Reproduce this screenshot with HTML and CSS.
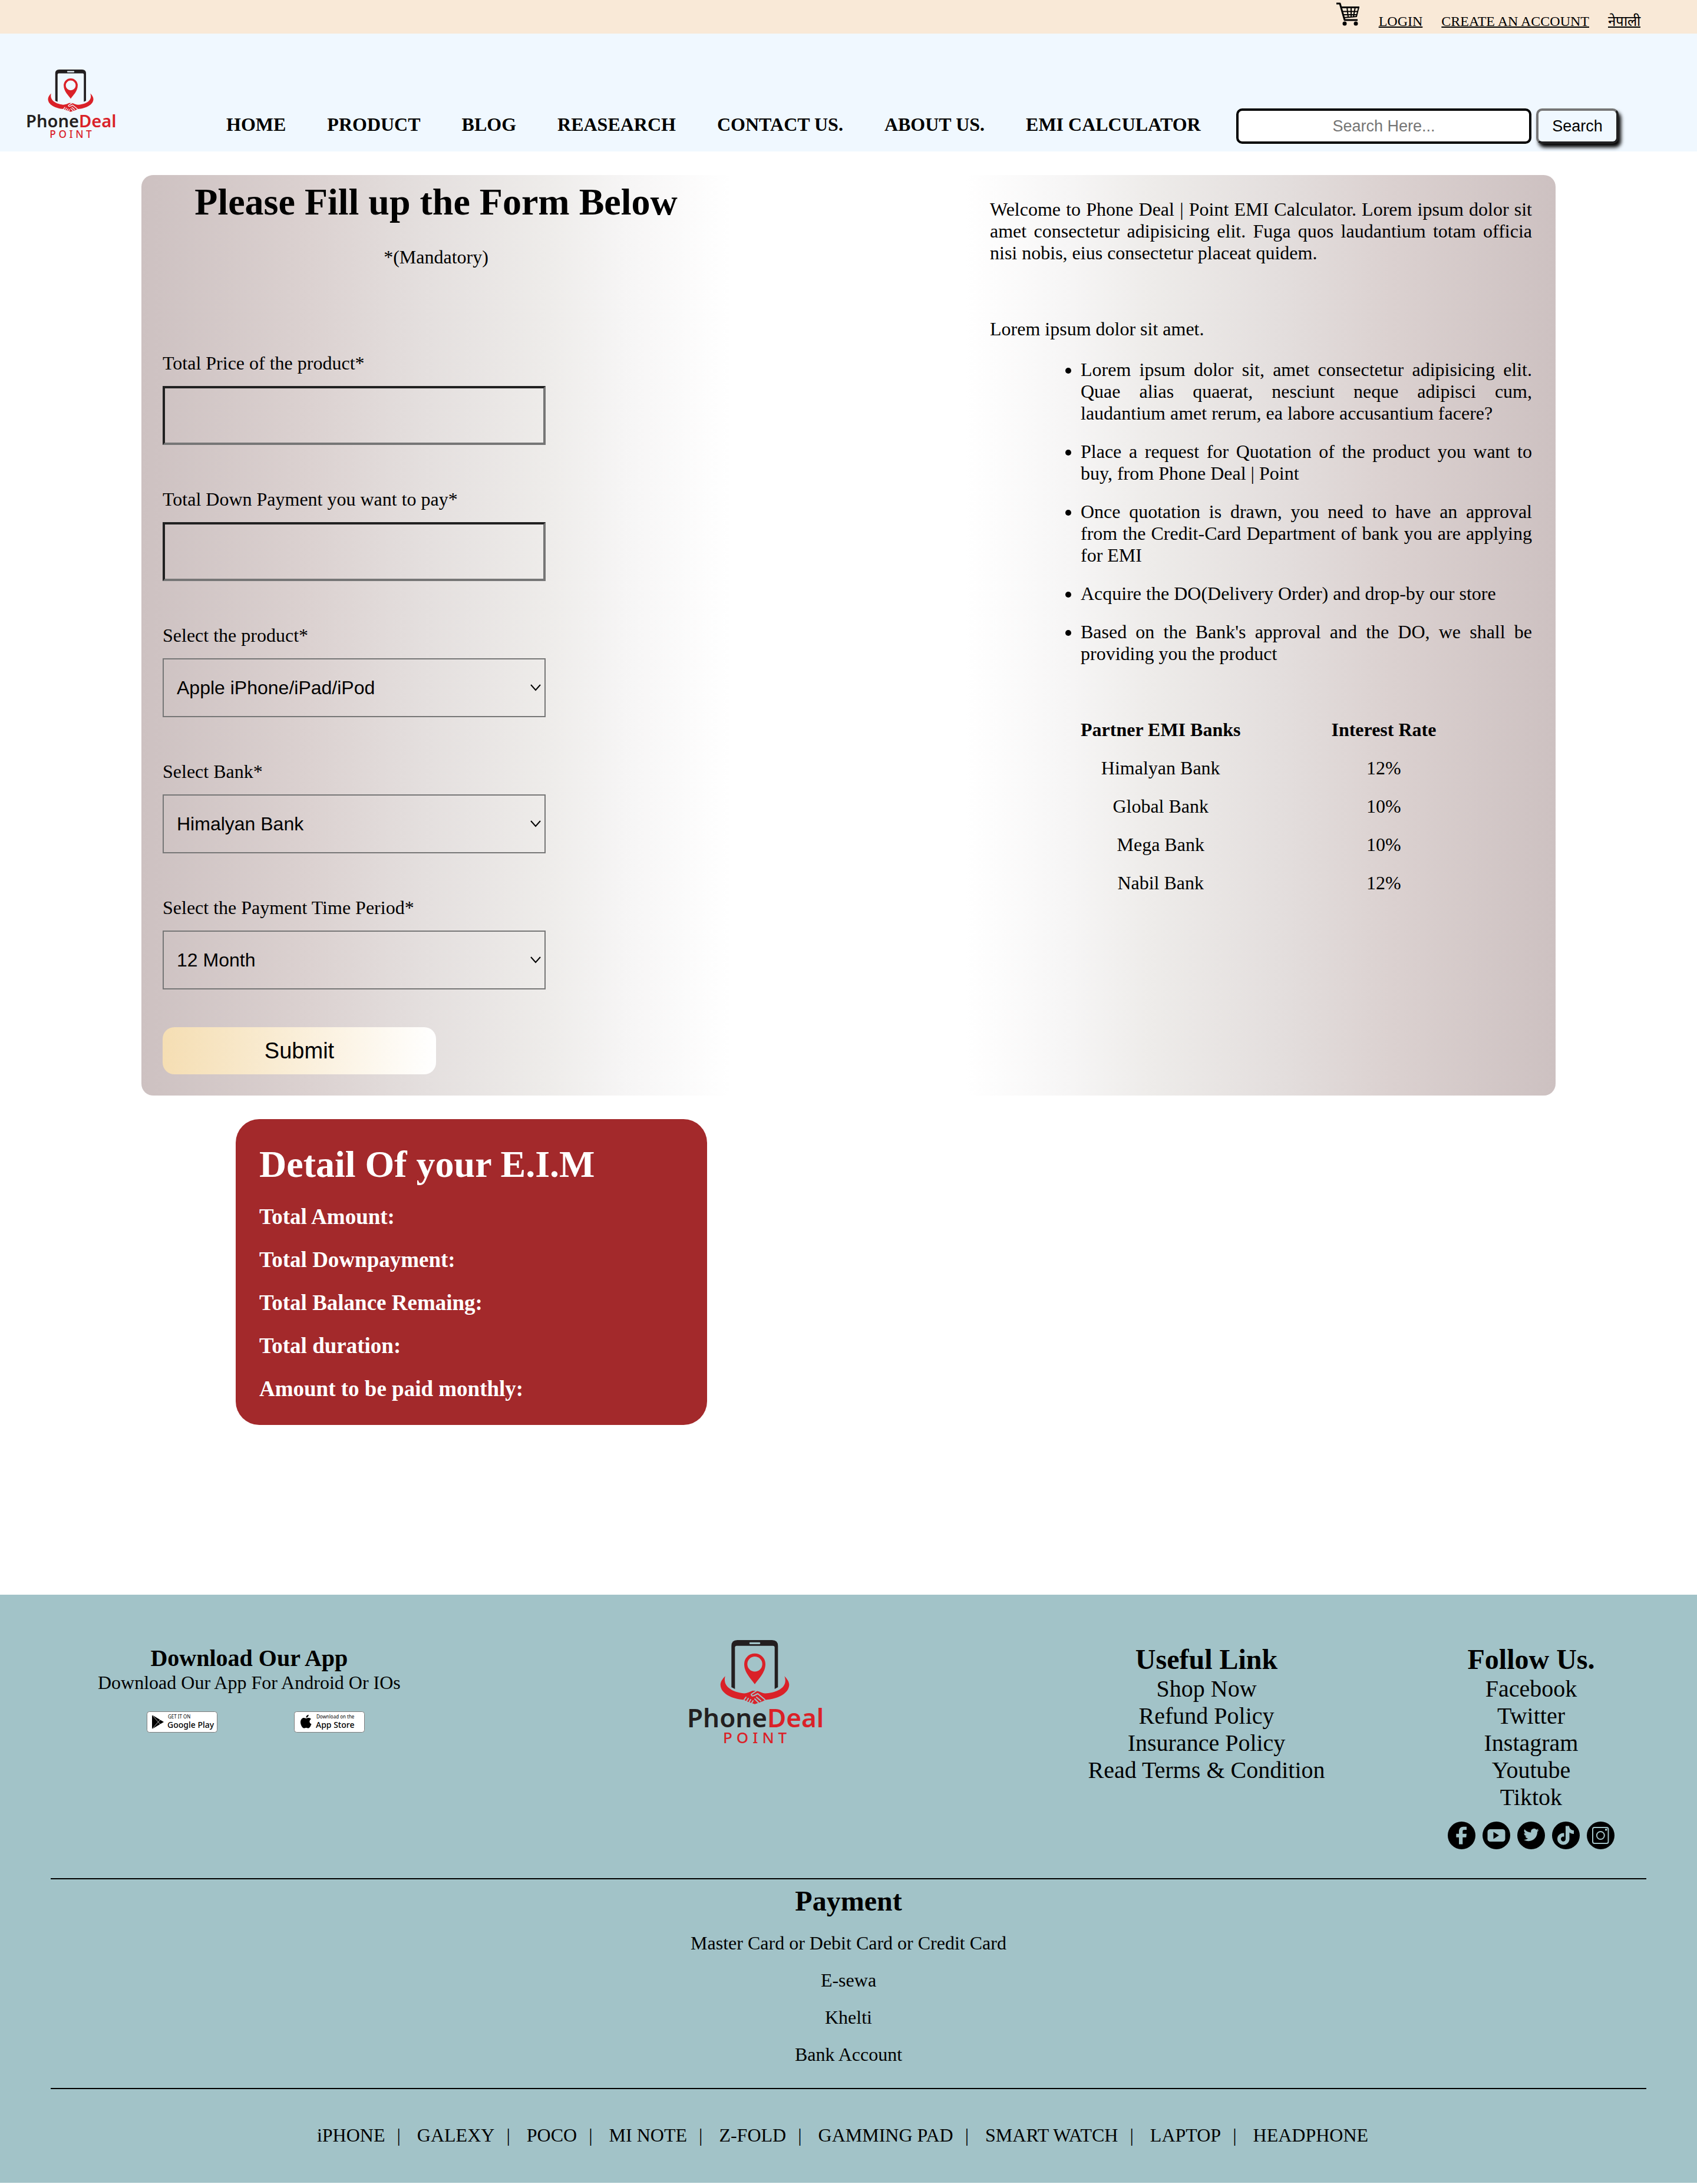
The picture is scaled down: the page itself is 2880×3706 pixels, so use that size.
FILE: index.html
```html
<!DOCTYPE html>
<html lang="en">
<head>
<meta charset="utf-8">
<meta name="viewport" content="width=device-width, initial-scale=1">
<title>EMI Calculator | Phone Deal Point</title>
<link rel="stylesheet" href="styles.css">
</head>
<body>
<div class="topbar">
  <a class="cart" href="#" aria-label="Cart">
    <svg width="40" height="40" viewBox="0 0 40 40" fill="none" stroke="#000">
      <path stroke-width="3" stroke-linejoin="round" d="M0 2H6L14 30H36"/>
      <path stroke-width="3" d="M8 8.500H39"/>
      <path stroke-width="2" d="M38 8L34 24L12 26M10 15.500H36M11 21H35M18 8L20 25M25 8V25M32 8L29 24"/>
      <circle cx="14" cy="36" r="3.500" fill="#000" stroke="none"/>
      <circle cx="33" cy="36" r="3.500" fill="#000" stroke="none"/>
    </svg>
  </a>
  <a href="#">LOGIN</a>
  <a href="#">CREATE AN ACCOUNT</a>
  <a href="#" lang="ne">नेपाली</a>
</div>

<header class="header">
  <a class="header-logo" href="#" aria-label="Phone Deal Point">
    <svg class="logo" viewBox="0 0 224 177">
      <path fill="#231f20" fill-rule="evenodd" d="M72.300 80V10Q72.300 0 82.300 0H141.300Q151.300 0 151.300 10V80L145.700 83V12.700Q145.700 9.700 142.700 9.700H81.300Q78.300 9.700 78.300 12.700V83ZM104 3.700Q102.700 3.700 102.700 5.300Q102.700 7 104 7H120Q121.300 7 121.300 5.300Q121.300 3.700 120 3.700Z"/>
      <path fill="#da2128" fill-rule="evenodd" d="M112 75C107 67 94 56 94 40.700A18 18 0 0 1 130 40.700C130 56 117 67 112 75ZM112 28A12.700 12.700 0 1 0 112 53.400A12.700 12.700 0 1 0 112 28Z"/>
      <path fill="#da2128" d="M61.700 61.300C57 66 53.700 71 53.700 76C54 90 72 100 94 101.500L98 104L112 108.700L125 104L130 101.500C152 100 170 90 170.300 76C170.300 71 167 66 162.300 61.300C170 82 146 90 130 90.500C122 90 119 86 113 86H108C103 88 98 91 91.700 90.300C74 88 57 79 61.700 61.300Z"/>
      <g class="logo-gap">
        <path d="M115 86L106 92Q106 96 111 94L117 91L129 101"/>
        <path d="M94 101L97 97M98 104L101 99M102 106L105 101M106 108L109 103M115 97L122 103M112 100L118 106"/>
      </g>
      <text class="logo-name" x="-3" y="148"><tspan fill="#231f20">Phone</tspan><tspan fill="#da2128">Deal</tspan></text>
      <text class="logo-sub" x="58" y="175" fill="#da2128">POINT</text>
    </svg>
  </a>
  <nav class="nav">
    <a href="#">HOME</a>
    <a href="#">PRODUCT</a>
    <a href="#">BLOG</a>
    <a href="#">REASEARCH</a>
    <a href="#">CONTACT US.</a>
    <a href="#">ABOUT US.</a>
    <a href="#">EMI CALCULATOR</a>
  </nav>
  <form class="search">
    <input type="text" placeholder="Search Here..." aria-label="Search">
    <button type="button">Search</button>
  </form>
</header>

<main class="main">
  <div class="panels">
    <form class="panel form-panel">
      <h1>Please Fill up the Form Below</h1>
      <p class="mandatory">*(Mandatory)</p>
      <div class="fields">
        <div class="field">
          <label for="price">Total Price of the product*</label>
          <input id="price" type="text">
        </div>
        <div class="field">
          <label for="down">Total Down Payment you want to pay*</label>
          <input id="down" type="text">
        </div>
        <div class="field">
          <label for="product">Select the product*</label>
          <div class="select">
            <select id="product"><option>Apple iPhone/iPad/iPod</option></select>
            <svg width="18" height="12" viewBox="0 0 18 12"><path d="M1 1L9 10L17 1"/></svg>
          </div>
        </div>
        <div class="field">
          <label for="bank">Select Bank*</label>
          <div class="select">
            <select id="bank"><option>Himalyan Bank</option><option>Global Bank</option><option>Mega Bank</option><option>Nabil Bank</option></select>
            <svg width="18" height="12" viewBox="0 0 18 12"><path d="M1 1L9 10L17 1"/></svg>
          </div>
        </div>
        <div class="field">
          <label for="period">Select the Payment Time Period*</label>
          <div class="select">
            <select id="period"><option>12 Month</option></select>
            <svg width="18" height="12" viewBox="0 0 18 12"><path d="M1 1L9 10L17 1"/></svg>
          </div>
        </div>
      </div>
      <button class="submit" type="button">Submit</button>
    </form>

    <section class="panel info-panel">
      <p>Welcome to Phone Deal | Point EMI Calculator. Lorem ipsum dolor sit amet consectetur adipisicing elit. Fuga quos laudantium totam officia nisi nobis, eius consectetur placeat quidem.</p>
      <p class="lead">Lorem ipsum dolor sit amet.</p>
      <ul>
        <li>Lorem ipsum dolor sit, amet consectetur adipisicing elit. Quae alias quaerat, nesciunt neque adipisci cum, laudantium amet rerum, ea labore accusantium facere?</li>
        <li>Place a request for Quotation of the product you want to buy, from Phone Deal | Point</li>
        <li>Once quotation is drawn, you need to have an approval from the Credit-Card Department of bank you are applying for EMI</li>
        <li>Acquire the DO(Delivery Order) and drop-by our store</li>
        <li>Based on the Bank's approval and the DO, we shall be providing you the product</li>
      </ul>
      <table>
        <thead><tr><th>Partner EMI Banks</th><th>Interest Rate</th></tr></thead>
        <tbody>
          <tr><td>Himalyan Bank</td><td>12%</td></tr>
          <tr><td>Global Bank</td><td>10%</td></tr>
          <tr><td>Mega Bank</td><td>10%</td></tr>
          <tr><td>Nabil Bank</td><td>12%</td></tr>
        </tbody>
      </table>
    </section>
  </div>

  <section class="detail">
    <h1>Detail Of your E.I.M</h1>
    <h3>Total Amount:</h3>
    <h3>Total Downpayment:</h3>
    <h3>Total Balance Remaing:</h3>
    <h3>Total duration:</h3>
    <h3>Amount to be paid monthly:</h3>
  </section>
</main>

<footer class="footer">
  <div class="footer-top">
    <section class="download">
      <h3>Download Our App</h3>
      <p>Download Our App For Android Or IOs</p>
      <div class="badges">
        <a href="#" aria-label="Get it on Google Play">
          <svg width="120" height="36" viewBox="0 0 120 36">
            <rect x=".5" y=".5" width="119" height="35" rx="4" fill="#fff" stroke="#7d7d7d"/>
            <path d="M9 6L29 18L9 30Z"/>
            <path d="M9 6L23 22M9 30L23 14" stroke="#fff" stroke-width=".7"/>
            <text class="badge-small" x="36" y="12">GET IT ON</text>
            <text class="badge-big" x="35" y="28">Google Play</text>
          </svg>
        </a>
        <a href="#" aria-label="Download on the App Store">
          <svg width="120" height="36" viewBox="0 0 120 36">
            <rect x=".5" y=".5" width="119" height="35" rx="4" fill="#fff" stroke="#7d7d7d"/>
            <path d="M20.500 12C22 11.500 23.500 10.600 25.500 11Q28 11.300 29 13C25 15.500 25.800 20 29.500 21.500C28.500 24.500 26.500 28.500 24.500 28.500C23 28.500 22.300 27.700 20.600 27.700C19 27.700 18 28.500 16.800 28.500C14 28.500 11 22.500 11 18.500C11 13.500 14 11 16.800 11C18.400 11 19.500 12 20.500 12ZM20.300 10.500C20.200 8 22.300 6 24.700 5.700C25 8.200 22.800 10.500 20.300 10.500Z"/>
            <text class="badge-small" x="38" y="12">Download on the</text>
            <text class="badge-big" x="37" y="28">App Store</text>
          </svg>
        </a>
      </div>
    </section>

    <a class="footer-logo" href="#" aria-label="Phone Deal Point">
      <svg class="logo" viewBox="0 0 224 177">
        <path fill="#231f20" fill-rule="evenodd" d="M72.300 80V10Q72.300 0 82.300 0H141.300Q151.300 0 151.300 10V80L145.700 83V12.700Q145.700 9.700 142.700 9.700H81.300Q78.300 9.700 78.300 12.700V83ZM104 3.700Q102.700 3.700 102.700 5.300Q102.700 7 104 7H120Q121.300 7 121.300 5.300Q121.300 3.700 120 3.700Z"/>
        <path fill="#da2128" fill-rule="evenodd" d="M112 75C107 67 94 56 94 40.700A18 18 0 0 1 130 40.700C130 56 117 67 112 75ZM112 28A12.700 12.700 0 1 0 112 53.400A12.700 12.700 0 1 0 112 28Z"/>
        <path fill="#da2128" d="M61.700 61.300C57 66 53.700 71 53.700 76C54 90 72 100 94 101.500L98 104L112 108.700L125 104L130 101.500C152 100 170 90 170.300 76C170.300 71 167 66 162.300 61.300C170 82 146 90 130 90.500C122 90 119 86 113 86H108C103 88 98 91 91.700 90.300C74 88 57 79 61.700 61.300Z"/>
        <g class="logo-gap">
          <path d="M115 86L106 92Q106 96 111 94L117 91L129 101"/>
          <path d="M94 101L97 97M98 104L101 99M102 106L105 101M106 108L109 103M115 97L122 103M112 100L118 106"/>
        </g>
        <text class="logo-name" x="-3" y="148"><tspan fill="#231f20">Phone</tspan><tspan fill="#da2128">Deal</tspan></text>
        <text class="logo-sub" x="58" y="175" fill="#da2128">POINT</text>
      </svg>
    </a>

    <section class="links">
      <h2>Useful Link</h2>
      <a href="#">Shop Now</a>
      <a href="#">Refund Policy</a>
      <a href="#">Insurance Policy</a>
      <a href="#">Read Terms &amp; Condition</a>
    </section>

    <section class="links">
      <h2>Follow Us.</h2>
      <a href="#">Facebook</a>
      <a href="#">Twitter</a>
      <a href="#">Instagram</a>
      <a href="#">Youtube</a>
      <a href="#">Tiktok</a>
      <div class="social">
        <a href="#" aria-label="Facebook"><svg width="47" height="47" viewBox="0 0 47 47"><circle cx="23.500" cy="23.500" r="23.500"/><path class="glyph" d="M19 38.500V26.700H14.300V20.700H19V17C19 11.500 22 8.700 26.500 8.700H32V14H28C26 14 25.300 15 25.300 16.700V20.700H32L31.300 26.700H25.300V38.500Z"/></svg></a>
        <a href="#" aria-label="Youtube"><svg width="47" height="47" viewBox="0 0 47 47"><circle cx="23.500" cy="23.500" r="23.500"/><rect class="glyph" x="8.500" y="13" width="30" height="21" rx="4.500"/><path d="M18.500 17.500L28 23.500L18.500 29.500Z"/></svg></a>
        <a href="#" aria-label="Twitter"><svg width="47" height="47" viewBox="0 0 47 47"><circle cx="23.500" cy="23.500" r="23.500"/><path class="glyph" transform="translate(10.500 9.500) scale(1.090)" d="M23.950 4.570a10 10 0 0 1-2.820.770 4.950 4.950 0 0 0 2.160-2.720c-.950.560-2 .960-3.130 1.190a4.920 4.920 0 0 0-8.380 4.480C7.690 8.090 4.070 6.130 1.640 3.160a4.900 4.900 0 0 0 1.520 6.570 4.900 4.900 0 0 1-2.230-.620v.060a4.920 4.920 0 0 0 3.950 4.830 5 5 0 0 1-2.210.080 4.940 4.940 0 0 0 4.600 3.420A9.870 9.870 0 0 1 0 19.540a13.990 13.990 0 0 0 7.550 2.210c9.050 0 14-7.500 14-13.980 0-.210 0-.420-.020-.630a9.940 9.940 0 0 0 2.420-2.570z"/></svg></a>
        <a href="#" aria-label="Tiktok"><svg width="47" height="47" viewBox="0 0 47 47"><circle cx="23.500" cy="23.500" r="23.500"/><path class="glyph" d="M23 7.500H29C29.300 11.500 32 14.500 37 15V21C34 21 31.500 20 29.500 18.500V29C29.500 35 25 39.500 19.300 39.500C13.500 39.500 9 35 9 29.500C9 23.500 14 19 20.500 19.500V25.700C17 25 15 27 15 29.500C15 32 17 33.700 19 33.700C21.500 33.700 23 32 23 29.500Z"/></svg></a>
        <a href="#" aria-label="Instagram"><svg width="47" height="47" viewBox="0 0 47 47"><circle cx="23.500" cy="23.500" r="23.500"/><g class="outline"><rect x="10" y="10" width="26.500" height="27" rx="3"/><circle cx="23.300" cy="23.500" r="6.500"/></g><rect class="glyph" x="31" y="12" width="3.500" height="3.500" rx="1"/></svg></a>
      </div>
    </section>
  </div>

  <section class="payment">
    <h2>Payment</h2>
    <p>Master Card or Debit Card or Credit Card</p>
    <p>E-sewa</p>
    <p>Khelti</p>
    <p>Bank Account</p>
  </section>

  <nav class="brands">
    <a href="#">iPHONE</a><span>|</span>
    <a href="#">GALEXY</a><span>|</span>
    <a href="#">POCO</a><span>|</span>
    <a href="#">MI NOTE</a><span>|</span>
    <a href="#">Z-FOLD</a><span>|</span>
    <a href="#">GAMMING PAD</a><span>|</span>
    <a href="#">SMART WATCH</a><span>|</span>
    <a href="#">LAPTOP</a><span>|</span>
    <a href="#">HEADPHONE</a>
  </nav>
</footer>
</body>
</html>
```
FILE: styles.css
```css
* {
  box-sizing: border-box;
  margin: 0;
  padding: 0;
}

body {
  font-family: "Liberation Serif", "Times New Roman", serif;
  font-size: 32px;
  line-height: 37px;
  color: #000;
  background: #fff;
}

a {
  color: inherit;
  text-decoration: none;
}

svg {
  display: block;
}

input,
select,
button {
  font-family: "Liberation Sans", Arial, sans-serif;
  color: #000;
}

/* Logo */
.logo {
  width: 100%;
  height: 100%;
  overflow: visible;
}

.logo-gap {
  fill: none;
  stroke: var(--logo-gap);
  stroke-width: 2px;
  stroke-linecap: round;
  stroke-linejoin: round;
}

.logo-name {
  font: 600 44px "Noto Sans", "Open Sans", sans-serif;
}

.logo-sub {
  font: 500 26px "Noto Sans", "Open Sans", sans-serif;
  letter-spacing: 7px;
}

/* Top bar */
.topbar {
  display: flex;
  justify-content: flex-end;
  align-items: flex-start;
  gap: 32px;
  height: 57px;
  padding: 4px 96px 0 0;
  background: #f9e9d7;
  font-size: 24px;
  line-height: 28px;
}

.topbar a {
  margin-top: 18px;
  text-decoration: underline;
  text-decoration-thickness: 2px;
}

.topbar .cart {
  margin-top: 0;
}

/* Header */
.header {
  --logo-gap: #f0f8ff;
  display: flex;
  align-items: flex-end;
  padding: 61px 133px 13px 46px;
  background: #f0f8ff;
}

.header-logo {
  width: 148px;
  height: 117px;
  margin-bottom: 9px;
}

.nav {
  display: flex;
  gap: 70px;
  margin: 0 0 14px 190px;
  font-weight: bold;
  white-space: nowrap;
}

.search {
  display: flex;
  gap: 8px;
  margin-left: auto;
}

.search input,
.search button {
  height: 60px;
  border-radius: 10px;
  font-size: 27px;
}

.search input {
  width: 501px;
  border: 4px solid #000;
  background: #fff;
  text-align: center;
}

.search input::placeholder {
  color: #757575;
}

.search button {
  width: 140px;
  border: 4px solid;
  border-color: #767676 #212121 #212121 #767676;
  background: #f0f8ff;
  box-shadow: 4px 6px 6px #000;
}

/* Main */
.main {
  padding: 40px 240px 288px;
}

.panels {
  display: grid;
  grid-template-columns: 5fr 5fr;
  column-gap: calc(100% / 6);
}

.form-panel {
  padding: 9px 36px 36px;
  border-radius: 20px 0 0 20px;
  background: linear-gradient(to right, #cdc1c1, #dbd1d0 28%, #e4dfde 48%, #eeecea 69%, #f6f5f5 82%, #fff);
}

.form-panel h1 {
  font-size: 64px;
  line-height: 74px;
  text-align: center;
}

.mandatory {
  margin: 38px 0 143px;
  text-align: center;
}

.fields {
  display: grid;
  gap: 74px;
  width: 70%;
}

.field {
  display: grid;
  gap: 20px;
}

.field input,
.field select {
  width: 100%;
  height: 100px;
  padding: 0 22px;
  border-radius: 0;
  background: transparent;
  font-size: 32px;
}

.field input {
  border: 4px solid;
  border-color: #212121 #767676 #767676 #212121;
}

.select {
  display: grid;
  align-items: center;
}

.select select,
.select svg {
  grid-area: 1 / 1;
}

.select select {
  border: 2px solid #767676;
  -webkit-appearance: none;
  appearance: none;
}

.select svg {
  justify-self: end;
  margin-right: 8px;
  pointer-events: none;
  fill: none;
  stroke: #000;
  stroke-width: 2px;
}

.submit {
  display: block;
  width: 50%;
  height: 80px;
  margin-top: 64px;
  border: 0;
  border-radius: 20px;
  background: linear-gradient(to right, #f5deb3, #fff);
  font-size: 38px;
}

.info-panel {
  padding: 40px;
  border-radius: 0 20px 20px 0;
  background: linear-gradient(to left, #cdc1c1, #dbd1d0 28%, #e4dfde 48%, #eeecea 69%, #f6f5f5 82%, #fff);
  text-align: justify;
}

.info-panel .lead {
  margin-top: 92px;
}

.info-panel ul {
  display: grid;
  gap: 28px;
  margin-top: 32px;
  padding-left: 154px;
}

.info-panel table {
  margin: 92px 0 0 154px;
  border-collapse: collapse;
  text-align: center;
}

.info-panel th,
.info-panel td {
  padding-bottom: 28px;
}

.info-panel th + th,
.info-panel td + td {
  padding-left: 154px;
}

.detail {
  display: grid;
  gap: 30px;
  width: calc(100% / 3);
  margin: 40px 0 0 160px;
  padding: 40px;
  border-radius: 40px;
  background: #a3292b;
  color: #fff;
}

.detail h1 {
  font-size: 64px;
  line-height: 74px;
}

.detail h3 {
  font-size: 37px;
  line-height: 43px;
}

/* Footer */
.footer {
  --logo-gap: #a2c3c8;
  padding: 0 86px 62px;
  background: #a2c3c8;
}

.footer-top {
  display: grid;
  grid-template-columns: 1004fr 678fr 611fr 281fr;
  justify-items: start;
  align-items: start;
  padding: 77px 54px 49px 80px;
  border-bottom: 2px solid #000;
}

.download {
  margin-top: 8px;
  text-align: center;
  white-space: nowrap;
}

.download h3 {
  font-size: 40px;
  line-height: 46px;
}

.badges {
  display: flex;
  justify-content: center;
  gap: 130px;
  margin-top: 30px;
  padding-left: 22px;
}

.badge-small {
  font: 8px "Noto Sans", sans-serif;
}

.badge-big {
  font: 500 14px "Noto Sans", sans-serif;
}

.footer-logo {
  width: 224px;
  height: 177px;
}

.links {
  display: grid;
  justify-items: center;
  margin-top: 5px;
  font-size: 40px;
  line-height: 46px;
  white-space: nowrap;
}

h2 {
  font-size: 48px;
  line-height: 55px;
}

.social {
  display: flex;
  gap: 12px;
  margin-top: 18px;
}

.glyph {
  fill: #a2c3c8;
}

.outline {
  fill: none;
  stroke: #a2c3c8;
  stroke-width: 2px;
}

.payment {
  display: grid;
  gap: 26px;
  padding: 9px 0 38px;
  border-bottom: 2px solid #000;
  text-align: center;
}

.brands {
  display: flex;
  justify-content: center;
  padding: 60px 20px 0 0;
}

.brands span {
  margin: 0 28px 0 20px;
}
```
